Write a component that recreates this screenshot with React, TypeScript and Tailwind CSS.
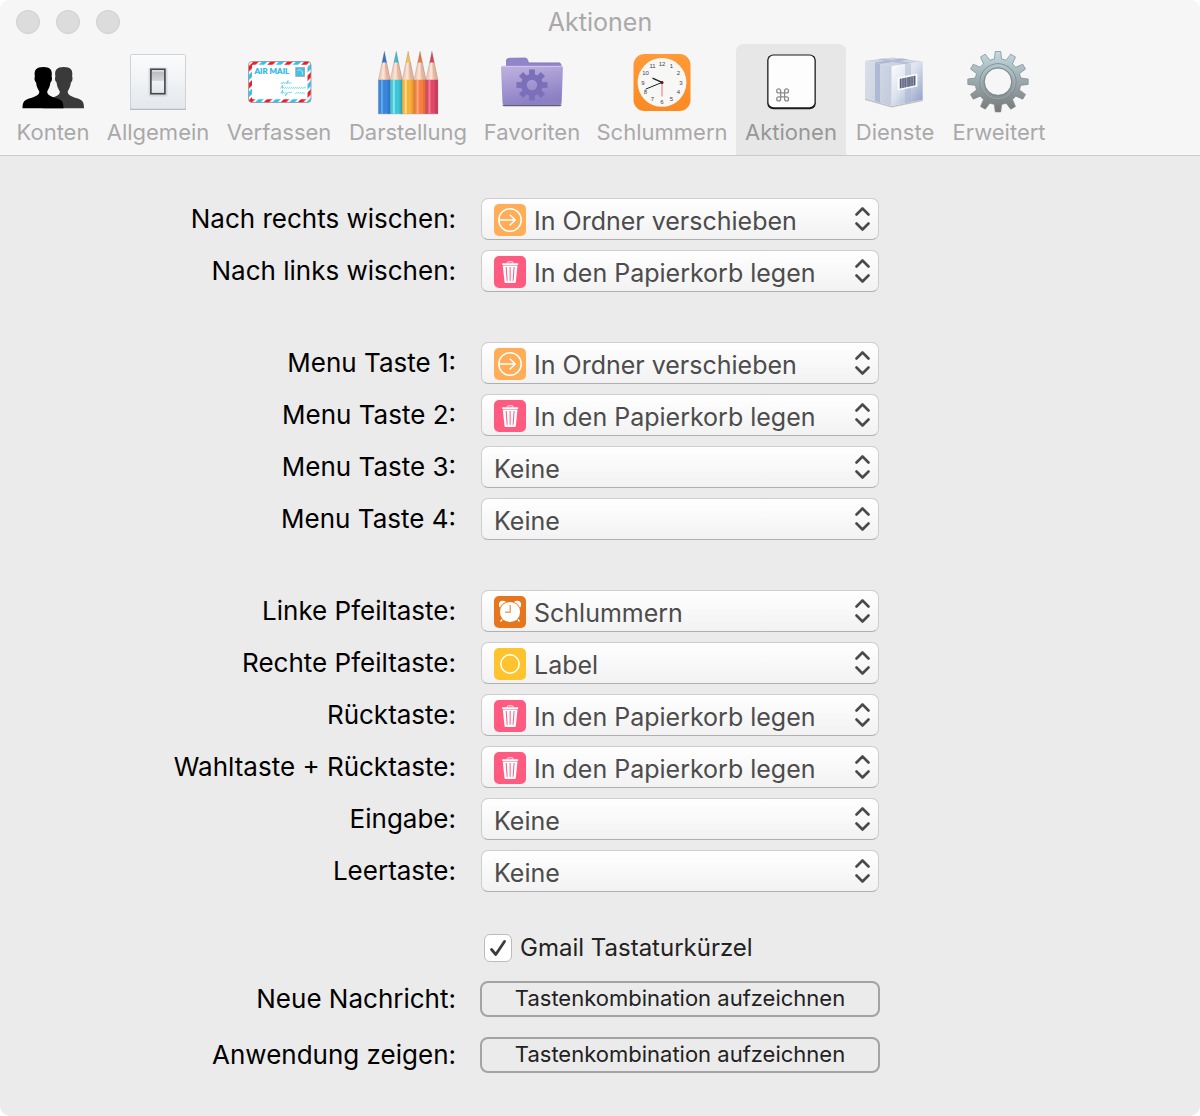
import { useId, useState, type ReactNode } from 'react'

type ActionName =
  | 'In Ordner verschieben'
  | 'In den Papierkorb legen'
  | 'Schlummern'
  | 'Label'
  | 'Keine'

const ACTIONS: ActionName[] = [
  'In Ordner verschieben',
  'In den Papierkorb legen',
  'Schlummern',
  'Label',
  'Keine',
]

function gearPath(cx: number, cy: number, teeth: number, rOut: number, rIn: number, tip: number, base: number) {
  const parts: string[] = []
  for (let i = 0; i < teeth; i++) {
    const a = (i / teeth) * Math.PI * 2 - Math.PI / 2
    const corners: [number, number][] = [
      [rIn, a - base],
      [rOut, a - tip],
      [rOut, a + tip],
      [rIn, a + base],
    ]
    for (const [r, t] of corners) {
      parts.push(`${(cx + r * Math.cos(t)).toFixed(2)} ${(cy + r * Math.sin(t)).toFixed(2)}`)
    }
  }
  return `M${parts.join('L')}Z`
}

function IconBox({ children }: { children: ReactNode }) {
  return (
    <svg viewBox="0 0 64 64" className="size-16 shrink-0 overflow-visible" aria-hidden="true">
      {children}
    </svg>
  )
}

const PERSON =
  'M1.5 58.3C1.5 52.5 3 50.3 8 48.6C14 46.6 18.3 45.6 18.3 41.5C16.8 39 15.4 36.5 15.1 32.5C13.3 31.5 13.2 28 13.9 26.6C12.6 19.6 15.6 17 22.3 17C29 17 31.8 19.6 30.6 26.6C31.3 28 31.2 31.5 29.4 32.5C29 36.5 27.6 39 26.2 41.5C26.2 45.6 30.5 46.6 36.5 48.6C41.2 50.3 42.5 52.5 42.5 58.3Z'

function AccountsIcon() {
  return (
    <IconBox>
      <path d={PERSON} fill="#3a3a3a" transform="translate(20.5 0)" />
      <path d={PERSON} fill="#000" />
    </IconBox>
  )
}

function GeneralIcon() {
  return (
    <IconBox>
      <defs>
        <linearGradient id="plate" x1="0" y1="0" x2="0" y2="1">
          <stop offset="0" stopColor="#fbfcfd" />
          <stop offset="1" stopColor="#e4e8ec" />
        </linearGradient>
        <linearGradient id="rocker" x1="0" y1="0" x2="0" y2="1">
          <stop offset="0" stopColor="#b4b5b8" />
          <stop offset="0.45" stopColor="#d3d4d7" />
          <stop offset="0.5" stopColor="#f0f2f4" />
          <stop offset="1" stopColor="#e3e6ea" />
        </linearGradient>
      </defs>
      <rect x="4" y="5" width="56" height="55" rx="1.5" fill="#9fa4a8" />
      <rect x="4.5" y="4.5" width="55" height="54.5" rx="1.2" fill="url(#plate)" stroke="#ced3d7" />
      <rect x="22.5" y="17.5" width="19" height="29" rx="2" fill="#c6cacf" opacity="0.6" />
      <rect x="24.9" y="19.3" width="14" height="24.4" fill="url(#rocker)" stroke="#42454a" strokeWidth="1.6" />
      <path d="M26 20.9H38" stroke="#fff" strokeWidth="1" />
    </IconBox>
  )
}

function ComposeIcon() {
  return (
    <IconBox>
      <defs>
        <pattern id="airmail" width="17" height="8" patternUnits="userSpaceOnUse" patternTransform="skewX(-45)">
          <rect width="17" height="8" fill="#fff" />
          <rect x="1" width="5.500" height="8" fill="#ee1c2e" />
          <rect x="9.500" width="5.500" height="8" fill="#2fc3f3" />
        </pattern>
        <pattern id="airmailSide" width="8" height="17" patternUnits="userSpaceOnUse" patternTransform="skewY(-45)">
          <rect width="8" height="17" fill="#fff" />
          <rect y="1" width="8" height="5.500" fill="#ee1c2e" />
          <rect y="9.500" width="8" height="5.500" fill="#2fc3f3" />
        </pattern>
      </defs>
      <rect x="1.5" y="11.500" width="62.500" height="41" rx="3.500" fill="url(#airmailSide)" />
      <path d="M4.500 11.500H61L57.500 15H7.500ZM4.500 52.500H61L57.500 49H7.500Z" fill="url(#airmail)" />
      <rect x="5" y="14.700" width="55.500" height="34.600" rx="1" fill="#fff" />
      <rect x="1.5" y="11.500" width="62.500" height="41" rx="3.500" fill="none" stroke="#9b9b9b" strokeWidth="0.900" />
      <text x="7.500" y="24" fontSize="8" fontWeight="700" fill="#22b4e8" stroke="#22b4e8" strokeWidth="0.200" fontFamily="Lato, sans-serif">
        AIR MAIL
      </text>
      <rect x="48.300" y="17.200" width="9.600" height="9.600" fill="#8ea1ab" />
      <rect x="49.400" y="18.300" width="7.400" height="7.400" fill="#3fc4ef" />
      <path d="M50.500 20.500C52.500 19 54.500 20 55.500 22V24.500" fill="none" stroke="#b4ecff" strokeWidth="0.900" />
      <g fill="none" stroke="#35c6ee" strokeWidth="0.700" strokeLinecap="round">
        <path d="M34 33.500q1.200-2.400 1.800 0q1.200-2.400 1.800 0q1-2 2 0l1.500-3l-.5 3q1-1.500 1.600 0q.6-1.500 2-.5" />
        <path d="M34 38.300l1.500-3l0 3q1-1.400 2 0q1-1.400 2 0q1-1.400 2 0q1-1.400 2 0q1-1.400 2 0q1-1.400 2 0q1-1.400 2 0q1-1.400 2 0q1-1.400 2 0q1-1.400 2 0q1-1 3-.5" />
        <path d="M34 43.300l1.500-3l0 3q1-1.400 2 0q1-1.400 2 0l-1 2.500l2-3q1-1.500 2 0l2-.5M48.500 43.300q1-1.400 2 0q1-1.400 2 0q1-1.400 2 0q1-1 3 0" />
      </g>
    </IconBox>
  )
}

const PENCILS = [
  { tip: '#2f75c9', light: '#62aaf0', body: '#3a86dc', dark: '#2a67b4' },
  { tip: '#35bccd', light: '#86e8ee', body: '#3fc6d6', dark: '#2b9eb0' },
  { tip: '#f2c04b', light: '#ffe08f', body: '#f8b03a', dark: '#d98d22' },
  { tip: '#e9753a', light: '#ffab7c', body: '#f57e42', dark: '#d0602b' },
  { tip: '#d8405f', light: '#f57a92', body: '#de4767', dark: '#b4304d' },
]

function AppearanceIcon() {
  return (
    <IconBox>
      {PENCILS.map((p, i) => (
        <g key={p.tip} transform={`translate(${2.4 + i * 11.9} 0)`}>
          <path d="M0 30L3.700 12H8.200L11.900 30Z" fill="#f3cdb8" />
          <path d="M6 12H8.200L11.900 30H8Z" fill="#e3b49e" />
          <path d="M4.600 12H6.400L6 30H3Z" fill="#fbe2d3" />
          <path d="M5.950 1.300L8.300 13Q6 11.500 3.600 13Z" fill={p.tip} />
          <rect y="29.800" width="11.900" height="34" fill={p.body} />
          <rect x="2.500" y="29.800" width="2" height="34" fill={p.light} />
          <rect x="9.200" y="29.800" width="2.700" height="34" fill={p.dark} opacity="0.500" />
          <path d="M0 64V30L5.950 1.300L11.900 30V64Z" fill="none" stroke="#5a4a48" strokeOpacity="0.350" strokeWidth="0.600" />
        </g>
      ))}
    </IconBox>
  )
}

function FavoritesIcon() {
  return (
    <IconBox>
      <defs>
        <linearGradient id="folder" x1="0" y1="0" x2="0.300" y2="1">
          <stop offset="0" stopColor="#c0b3e0" />
          <stop offset="0.500" stopColor="#a699d3" />
          <stop offset="1" stopColor="#8c7fc4" />
        </linearGradient>
      </defs>
      <path d="M6 18V11Q6 8.500 8.500 8.300L25 8Q27 8 27.600 10L28.500 12.700H59Q61.500 12.700 61.500 15.500V20H6Z" fill="#9284c8" />
      <path d="M6.500 12Q6.500 8.500 9 8.300L25 8Q27 8 27.600 10L28.500 13H60" fill="none" stroke="#8477b8" strokeWidth="0.800" />
      <path d="M2.500 54.800H61.500V55.500Q61 56.300 59.500 56.300H4.500Q3 56.300 2.500 55.500Z" fill="#62616a" />
      <path d="M1 18Q1 15.800 3.500 15.800H60.500Q63 15.800 62.900 18L61.600 53Q61.500 55 59.500 55H4.500Q2.600 55 2.500 53Z" fill="url(#folder)" />
      <path d="M2.500 16.500H61.500" stroke="#d0c7ec" strokeWidth="0.900" />
      <path
        d={`${gearPath(32, 35, 8, 15.8, 11, 0.19, 0.26)}M37.200 35a5.200 5.200 0 1 0-10.400 0a5.200 5.200 0 1 0 10.400 0Z`}
        fill="#7c6fb9"
        fillRule="evenodd"
      />
    </IconBox>
  )
}

function SnoozeIcon() {
  return (
    <IconBox>
      <defs>
        <linearGradient id="clockCase" x1="0" y1="0" x2="0" y2="1">
          <stop offset="0" stopColor="#ff9a38" />
          <stop offset="1" stopColor="#fb8a22" />
        </linearGradient>
      </defs>
      <rect x="3.500" y="4" width="57" height="57" rx="11" fill="url(#clockCase)" />
      <circle cx="32" cy="32.400" r="24.400" fill="#f7f7f5" />
      {Array.from({ length: 12 }, (_, i) => {
        const a = ((i + 1) / 12) * Math.PI * 2
        return (
          <text
            key={i}
            x={32 + 19 * Math.sin(a)}
            y={34.6 - 19 * Math.cos(a)}
            fontSize="6"
            fill="#444"
            textAnchor="middle"
            fontFamily="Liberation Sans, sans-serif"
          >
            {i + 1}
          </text>
        )
      })}
      <path d="M32 32.400V46.500" stroke="#f58f8f" strokeWidth="1.300" />
      <path d="M32 32.400L23 28.300" stroke="#222" strokeWidth="1.300" strokeLinecap="round" />
      <path d="M32 32.400L16 39" stroke="#222" strokeWidth="1" strokeLinecap="round" />
      <circle cx="32" cy="32.400" r="1.500" fill="#5c1515" />
    </IconBox>
  )
}

function ActionsIcon() {
  return (
    <IconBox>
      <rect x="8.200" y="4.500" width="48.600" height="54.800" rx="6" fill="#1b1b1b" />
      <rect x="9.500" y="5.600" width="46" height="51.700" rx="5" fill="#fdfdfd" />
      <g transform="translate(15.700 37) scale(0.660)" fill="none" stroke="#8b8b8b" strokeWidth="1.900">
        <path d="M15 6v12a3 3 0 1 0 3-3H6a3 3 0 1 0 3 3V6a3 3 0 1 0-3 3h12a3 3 0 1 0-3-3" />
      </g>
    </IconBox>
  )
}

function ServicesIcon() {
  return (
    <IconBox>
      <defs>
        <linearGradient id="boxLeft" x1="0" y1="0" x2="1" y2="0.400">
          <stop offset="0" stopColor="#dbe0ea" />
          <stop offset="1" stopColor="#c6cddd" />
        </linearGradient>
        <linearGradient id="boxRight" x1="0" y1="0" x2="1" y2="1">
          <stop offset="0" stopColor="#ffffff" />
          <stop offset="0.450" stopColor="#dde2ee" />
          <stop offset="1" stopColor="#8b9ac2" />
        </linearGradient>
      </defs>
      <path d="M2 48.500L28.700 55.900L59.800 49.600V51L28.700 57.500L2 50Z" fill="#a9a9ad" opacity="0.700" />
      <path d="M2 10.800L30.300 7.400L59.700 11.600L28.700 16.200Z" fill="#cdd4e3" />
      <path d="M12 12.600L39 8.600L46 9.600L17 13.800Z" fill="#a9b6d0" />
      <path d="M14 9.300L20 8.600L49 13L42 14.200Z" fill="#b4bfd6" />
      <path d="M2 10.800L28.700 16.200V55.900L2 48.500Z" fill="url(#boxLeft)" />
      <path d="M12 12.800L17 13.800V52.700L12 51.300Z" fill="#aebad5" />
      <path d="M28.700 16.200L59.700 11.600V49.600L28.700 55.900Z" fill="url(#boxRight)" />
      <path d="M42 14.200L48 13.300V52L42 53.200Z" fill="#a9b6d3" opacity="0.500" />
      <path d="M34.600 27.400L54.400 23.400V36.600L34.600 40.600Z" fill="#fbfcff" />
      <path d="M36.600 28.900L52.600 25.600V35.200L36.600 38.600Z" fill="#9299ad" />
      <path
        d="M37.600 28.700V38.300M40 28.200V37.900M42.200 27.800V37.400M45 27.200V36.800M46.800 26.900V36.400M49 26.400V36M51.600 25.900V35.400"
        stroke="#525a74"
        strokeWidth="1"
      />
    </IconBox>
  )
}

function AdvancedIcon() {
  return (
    <IconBox>
      <defs>
        <linearGradient id="steel" x1="0" y1="0" x2="0" y2="1">
          <stop offset="0" stopColor="#c3dbe3" />
          <stop offset="0.500" stopColor="#9aa8ad" />
          <stop offset="1" stopColor="#777878" />
        </linearGradient>
      </defs>
      <path
        d={`${gearPath(31, 31.7, 12, 30.3, 23, 0.09, 0.16)}M44.600 31.700a13.600 13.600 0 1 0-27.200 0a13.600 13.600 0 1 0 27.200 0Z`}
        fill="url(#steel)"
        fillRule="evenodd"
        stroke="#7d888c"
        strokeWidth="0.700"
        strokeLinejoin="round"
      />
      <circle cx="31" cy="31.700" r="18" fill="none" stroke="#7b888e" strokeWidth="0.900" />
      <circle cx="31" cy="31.700" r="17" fill="none" stroke="#c2ced2" strokeWidth="0.700" opacity="0.500" />
      <circle cx="31" cy="31.700" r="14" fill="none" stroke="#75858a" strokeWidth="0.800" />
    </IconBox>
  )
}

const TABS = [
  { label: 'Konten', icon: <AccountsIcon />, width: 'w-[90px]' },
  { label: 'Allgemein', icon: <GeneralIcon />, width: 'w-[120px]' },
  { label: 'Verfassen', icon: <ComposeIcon />, width: 'w-[122px]' },
  { label: 'Darstellung', icon: <AppearanceIcon />, width: 'w-[136px]' },
  { label: 'Favoriten', icon: <FavoritesIcon />, width: 'w-[112px]' },
  { label: 'Schlummern', icon: <SnoozeIcon />, width: 'w-[148px]' },
  { label: 'Aktionen', icon: <ActionsIcon />, width: 'w-[110px]' },
  { label: 'Dienste', icon: <ServicesIcon />, width: 'w-[98px]' },
  { label: 'Erweitert', icon: <AdvancedIcon />, width: 'w-[110px]' },
]

function ActionIcon({ action }: { action: ActionName }) {
  if (action === 'In Ordner verschieben') {
    return (
      <svg viewBox="0 0 32 32" className="size-8" aria-hidden="true">
        <rect width="32" height="32" rx="5" fill="#ffad57" />
        <g fill="none" stroke="#fff" strokeWidth="1.500">
          <circle cx="16" cy="16" r="11.200" />
          <path d="M5 16H21M15.800 10.800L21.200 16L15.800 21.200" />
        </g>
      </svg>
    )
  }
  if (action === 'In den Papierkorb legen') {
    return (
      <svg viewBox="0 0 32 32" className="size-8" aria-hidden="true">
        <rect width="32" height="32" rx="5" fill="#ff5b80" />
        <path d="M13.300 7.500V6.700Q13.300 5.800 14.300 5.800H18Q19 5.800 19 6.700V7.500" fill="none" stroke="#fff" strokeWidth="0.900" />
        <rect x="8" y="7.300" width="16.300" height="1.700" rx="0.700" fill="#fff" />
        <path d="M8.800 9.600H23.500L21.800 26Q21.700 27 20.700 27H11.600Q10.600 27 10.500 26Z" fill="#fff" />
        <path d="M12.200 11L13.200 24.800M16.150 11V24.800M20.100 11L19.100 24.800" stroke="#ff5b80" strokeWidth="1" />
      </svg>
    )
  }
  if (action === 'Schlummern') {
    return (
      <svg viewBox="0 0 32 32" className="size-8" aria-hidden="true">
        <rect width="32" height="32" rx="5" fill="#e6761d" />
        <path d="M9.500 22L6.500 25.500M22.500 22L25.500 25.500" stroke="#fff" strokeWidth="1.200" />
        <circle cx="8.800" cy="8.600" r="3.900" fill="#fff" />
        <circle cx="23.200" cy="8.600" r="3.900" fill="#fff" />
        <circle cx="16" cy="16" r="10.800" fill="#e6761d" />
        <circle cx="16" cy="16" r="10.100" fill="#fff" />
        <path d="M16.200 9V16.200H11" fill="none" stroke="#eb8f4a" strokeWidth="1.200" />
      </svg>
    )
  }
  return (
    <svg viewBox="0 0 32 32" className="size-8" aria-hidden="true">
      <rect width="32" height="32" rx="5" fill="#ffc32e" />
      <circle cx="16" cy="16" r="9.200" fill="none" stroke="#fff" strokeWidth="1.500" />
    </svg>
  )
}

function Row({ label, htmlFor, children }: { label: string; htmlFor: string; children: ReactNode }) {
  return (
    <div className="flex items-center gap-6">
      <label htmlFor={htmlFor} className="w-[38%] shrink-0 text-right text-[26px] leading-8 whitespace-nowrap text-black">
        {label}
      </label>
      <div className="max-w-[400px] min-w-0 grow">{children}</div>
    </div>
  )
}

function ActionRow({ label, initial }: { label: string; initial: ActionName }) {
  const id = useId()
  const [action, setAction] = useState<ActionName>(initial)
  const hasIcon = action !== 'Keine'
  return (
    <Row label={label} htmlFor={id}>
      <div className="relative mx-px">
        <select
          id={id}
          value={action}
          onChange={(e) => setAction(e.target.value as ActionName)}
          className={`block h-[42px] w-full appearance-none rounded-[7px] border border-[#cdcdcd] border-b-[#b0b0b0] bg-linear-to-b from-white to-[#f2f2f2] pt-1 pr-10 text-[25px] leading-8 text-[#4c4c4c] ${hasIcon ? 'pl-[52px]' : 'pl-3'}`}
        >
          {ACTIONS.map((a) => (
            <option key={a}>{a}</option>
          ))}
        </select>
        {hasIcon && (
          <span className="pointer-events-none absolute top-[6px] left-[13px]">
            <ActionIcon action={action} />
          </span>
        )}
        <svg
          viewBox="0 0 16 26"
          className="pointer-events-none absolute top-2 right-2 h-[26px] w-4"
          fill="none"
          stroke="#4a4a4a"
          strokeWidth="2.600"
          strokeLinecap="round"
          strokeLinejoin="round"
          aria-hidden="true"
        >
          <path d="M1.500 8.500L7.500 2.500L13.500 8.500M1.500 17.500L7.500 23.500L13.500 17.500" />
        </svg>
      </div>
    </Row>
  )
}

function ShortcutRow({ label }: { label: string }) {
  const id = useId()
  return (
    <Row label={label} htmlFor={id}>
      <button
        id={id}
        type="button"
        className="flex h-9 w-full items-center justify-center rounded-[8px] border-2 border-[#a3a3a3] pb-[2px] text-[22px] leading-7 text-[#222]"
      >
        Tastenkombination aufzeichnen
      </button>
    </Row>
  )
}

const GROUPS: { label: string; initial: ActionName }[][] = [
  [
    { label: 'Nach rechts wischen:', initial: 'In Ordner verschieben' },
    { label: 'Nach links wischen:', initial: 'In den Papierkorb legen' },
  ],
  [
    { label: 'Menu Taste 1:', initial: 'In Ordner verschieben' },
    { label: 'Menu Taste 2:', initial: 'In den Papierkorb legen' },
    { label: 'Menu Taste 3:', initial: 'Keine' },
    { label: 'Menu Taste 4:', initial: 'Keine' },
  ],
  [
    { label: 'Linke Pfeiltaste:', initial: 'Schlummern' },
    { label: 'Rechte Pfeiltaste:', initial: 'Label' },
    { label: 'Rücktaste:', initial: 'In den Papierkorb legen' },
    { label: 'Wahltaste + Rücktaste:', initial: 'In den Papierkorb legen' },
    { label: 'Eingabe:', initial: 'Keine' },
    { label: 'Leertaste:', initial: 'Keine' },
  ],
]

export default function App() {
  const [gmail, setGmail] = useState(true)
  return (
    <div className="flex min-h-screen flex-col overflow-hidden rounded-[10px] bg-[#ebebeb] font-['Inter',sans-serif]">
      <header className="border-b border-[#cbcbcb] bg-[#f6f6f6]">
        <div className="grid h-11 grid-cols-[1fr_auto_1fr] items-center px-4">
          <div className="flex gap-4">
            {['Schließen', 'Minimieren', 'Zoomen'].map((name) => (
              <button
                key={name}
                type="button"
                aria-label={name}
                className="size-6 rounded-full border border-[#cfcfcf] bg-[#dcdcdc]"
              />
            ))}
          </div>
          <h1 className="text-[25px] leading-8 text-[#a9a9a9]">Aktionen</h1>
        </div>
        <nav className="flex px-2">
          {TABS.map((tab) => {
            const active = tab.label === 'Aktionen'
            return (
              <button
                key={tab.label}
                type="button"
                aria-current={active ? 'page' : undefined}
                className={`flex shrink-0 flex-col items-center gap-1 rounded-t-[7px] pt-[6px] pb-[9px] ${tab.width} ${active ? 'bg-[#e7e7e7] text-[#979797]' : 'text-[#a9a9a9]'}`}
              >
                {tab.icon}
                <span className="text-[22px] leading-7">{tab.label}</span>
              </button>
            )
          })}
        </nav>
      </header>

      <main className="pt-[42px]">
        <div className="flex flex-col gap-[50px]">
          {GROUPS.map((group) => (
            <div key={group[0].label} className="flex flex-col gap-[10px]">
              {group.map((row) => (
                <ActionRow key={row.label} {...row} />
              ))}
            </div>
          ))}
        </div>

        <div className="mt-10 flex gap-6">
          <span className="w-[38%] shrink-0" />
          <label className="flex items-center gap-2 pl-1 text-[24px] leading-8 text-[#222]">
            <span className="relative flex size-7">
              <input
                type="checkbox"
                checked={gmail}
                onChange={(e) => setGmail(e.target.checked)}
                className="size-7 appearance-none rounded-[6px] border border-[#bcbcbc] bg-white"
              />
              {gmail && (
                <svg
                  viewBox="0 0 28 28"
                  className="pointer-events-none absolute inset-0"
                  fill="none"
                  stroke="#3c3c3c"
                  strokeWidth="2.800"
                  strokeLinecap="round"
                  strokeLinejoin="round"
                  aria-hidden="true"
                >
                  <path d="M7.500 15.500L11.800 20.500L20.500 7.500" />
                </svg>
              )}
            </span>
            Gmail Tastaturkürzel
          </label>
        </div>

        <div className="mt-[17px] flex flex-col gap-5">
          <ShortcutRow label="Neue Nachricht:" />
          <ShortcutRow label="Anwendung zeigen:" />
        </div>
      </main>
    </div>
  )
}
